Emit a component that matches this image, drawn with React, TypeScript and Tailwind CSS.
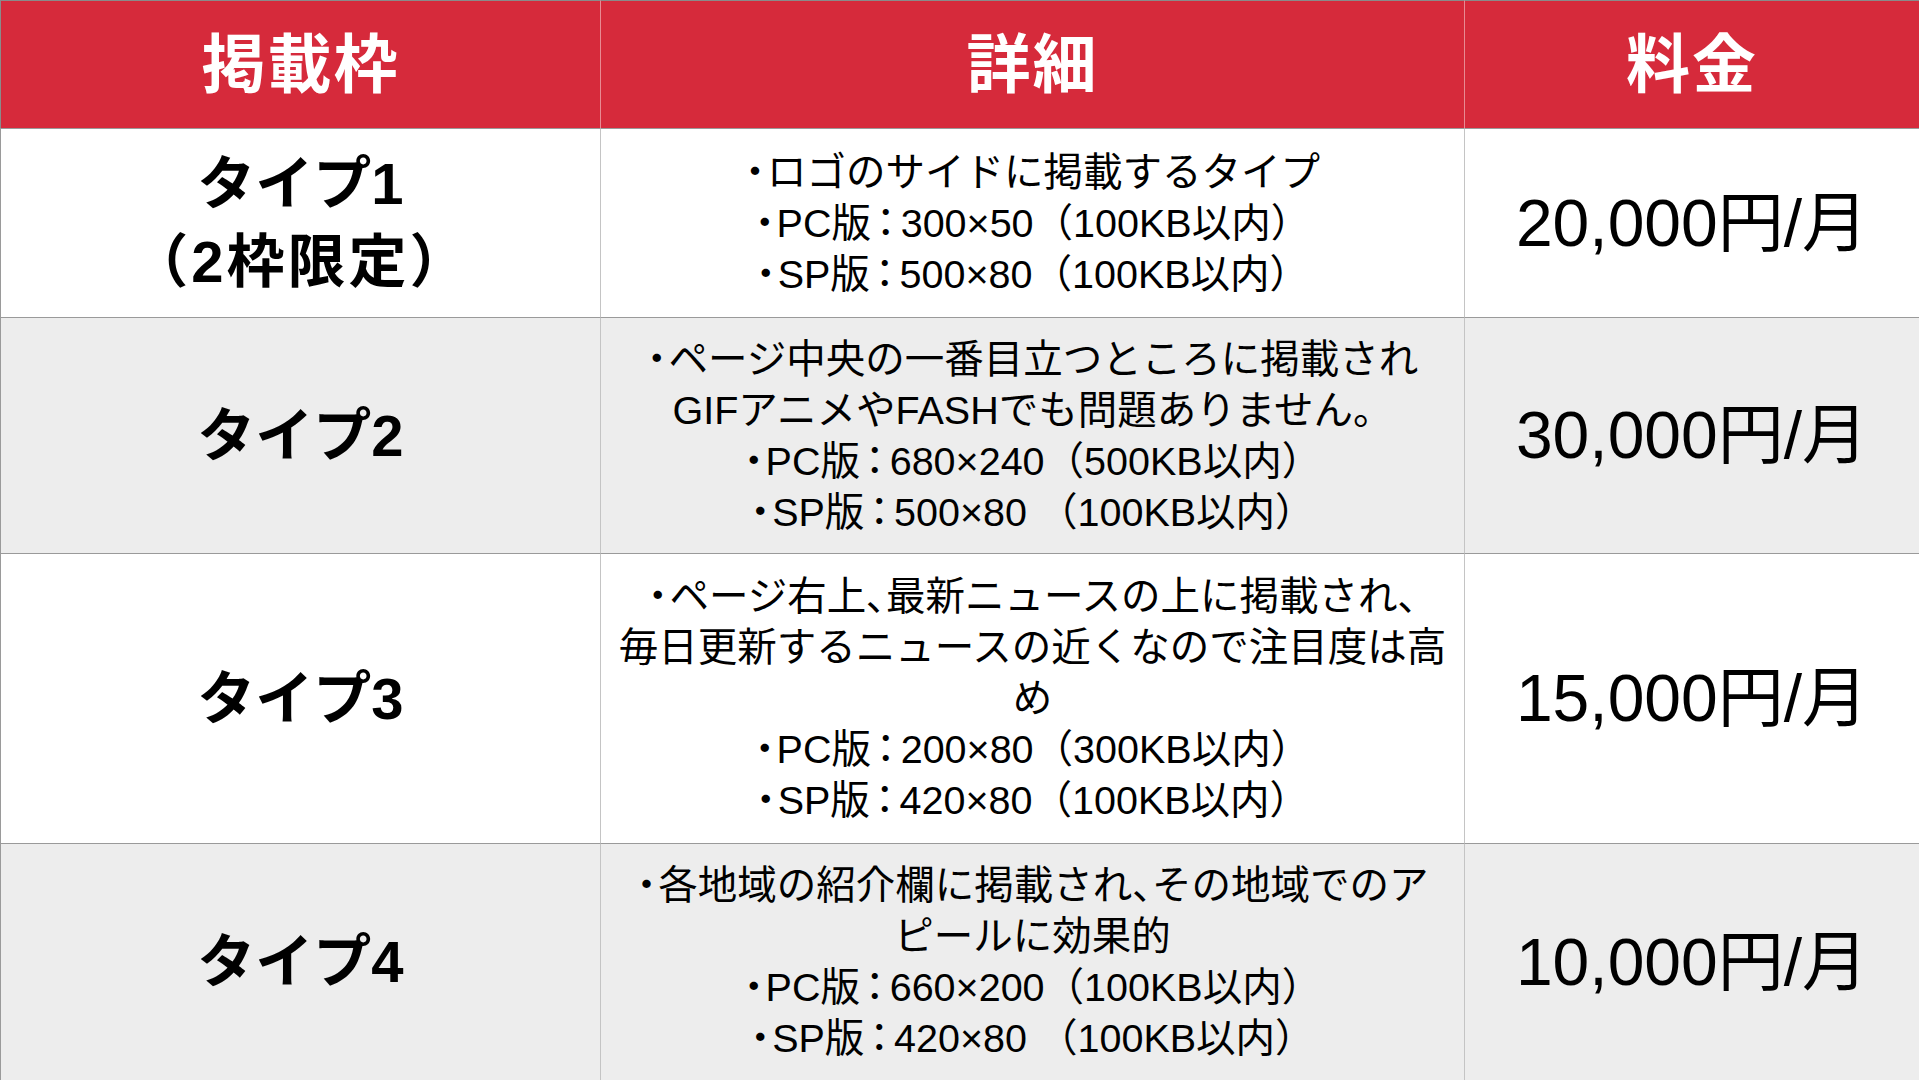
import React from "react";

const font = { fontFamily: "'Liberation Sans', 'Noto Sans CJK JP', sans-serif" };

type Row = { name: string[]; details: string[]; price: string; bg: string };

const rows: Row[] = [
  {
    name: ["タイプ1", "（2枠限定）"],
    details: ["・ロゴのサイドに掲載するタイプ", "・PC版：300×50（100KB以内）", "・SP版：500×80（100KB以内）"],
    price: "20,000円/月",
    bg: "bg-white",
  },
  {
    name: ["タイプ2"],
    details: [
      "・ページ中央の一番目立つところに掲載され",
      "GIFアニメやFASHでも問題ありません。",
      "・PC版：680×240（500KB以内）",
      "・SP版：500×80 （100KB以内）",
    ],
    price: "30,000円/月",
    bg: "bg-[#ededed]",
  },
  {
    name: ["タイプ3"],
    details: [
      "・ページ右上、最新ニュースの上に掲載され、",
      "毎日更新するニュースの近くなので注目度は高",
      "め",
      "・PC版：200×80（300KB以内）",
      "・SP版：420×80（100KB以内）",
    ],
    price: "15,000円/月",
    bg: "bg-white",
  },
  {
    name: ["タイプ4"],
    details: [
      "・各地域の紹介欄に掲載され、その地域でのア",
      "ピールに効果的",
      "・PC版：660×200（100KB以内）",
      "・SP版：420×80 （100KB以内）",
    ],
    price: "10,000円/月",
    bg: "bg-[#ededed]",
  },
];

function Line({ text }: { text: string }) {
  const parts = text.split(/([・：、])/);
  return (
    <div className="whitespace-pre">
      {parts.map((p, i) =>
        p === "・" ? (
          <span key={i} className="[font-feature-settings:'palt'] mr-[2px]">
            {p}
          </span>
        ) : p === "：" ? (
          <span key={i} className="[font-feature-settings:'palt'] mx-[5px]">
            {p}
          </span>
        ) : p === "、" ? (
          <span key={i} className="[font-feature-settings:'palt']">
            {p}
          </span>
        ) : (
          <React.Fragment key={i}>{p}</React.Fragment>
        )
      )}
    </div>
  );
}

export default function App() {
  return (
    <div
      style={font}
      className="w-[1919px] h-[1080px] overflow-hidden grid grid-cols-[601px_864px_454px] grid-rows-[128px_189px_236px_290px_237px] text-black"
    >
      {["掲載枠", "詳細", "料金"].map((h, i) => (
        <div
          key={h}
          className={`bg-[#d62a3b] flex items-center justify-center text-white font-bold text-[64px] tracking-[2px] border-t border-t-[#8a8a8a] ${
            i < 2 ? "border-r border-r-[#e88a93]" : ""
          } ${i === 0 ? "border-l border-l-[#8a8a8a]" : ""}`}
        >
          {h}
        </div>
      ))}
      {rows.map((r, ri) => (
        <React.Fragment key={ri}>
          <div
            className={`${r.bg} border-t border-t-[#9a9a9a] border-r border-r-[#c4c4c4] border-l border-l-[#9a9a9a] flex flex-col items-center justify-center font-bold text-[58px] leading-[78px]`}
          >
            {r.name.map((n, ni) => (
              <div key={n} className={`whitespace-nowrap ${ni === 1 ? "tracking-[3px]" : ""}`}>
                {n}
              </div>
            ))}
          </div>
          <div
            className={`${r.bg} border-t border-t-[#9a9a9a] border-r border-r-[#c4c4c4] flex flex-col items-center justify-center text-[39.5px] leading-[51px]`}
          >
            {r.details.map((d, di) => (
              <Line key={di} text={d} />
            ))}
          </div>
          <div
            className={`${r.bg} border-t border-t-[#9a9a9a] flex items-center justify-center text-[66px]`}
          >
            <span className="whitespace-nowrap">{r.price}</span>
          </div>
        </React.Fragment>
      ))}
    </div>
  );
}
